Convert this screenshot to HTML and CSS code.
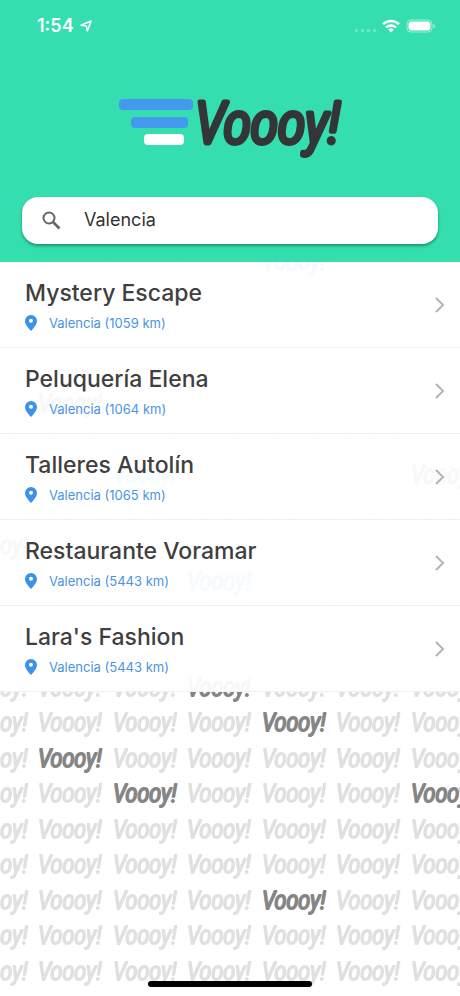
FILE: index.html
```
<!DOCTYPE html>
<html lang="es">
<head>
<meta charset="utf-8">
<meta name="viewport" content="width=device-width, initial-scale=1">
<title>Voooy!</title>
<link rel="stylesheet" href="styles.css">
</head>
<body>
<div class="screen">
  <svg class="wallpaper" aria-hidden="true">
    <defs>
      <pattern id="tile" x="37" y="1" width="149" height="71" patternUnits="userSpaceOnUse">
        <g class="mark mark-pale">
          <text x="1" y="20">Voooy!</text>
          <text x="76" y="20">Voooy!</text>
          <text x="1" y="56">Voooy!</text>
          <text x="76" y="56">Voooy!</text>
        </g>
      </pattern>
    </defs>
    <rect width="100%" height="100%" fill="url(#tile)"/>
    <g class="mark mark-blue">
      <text x="262" y="270">Voooy!</text>
      <text x="187" y="590">Voooy!</text>
    </g>
    <g class="mark mark-green">
      <text x="113" y="483">Voooy!</text>
    </g>
    <g class="mark mark-dark">
      <text x="38" y="412">Voooy!</text>
      <text x="411" y="483">Voooy!</text>
      <text x="-36" y="554">Voooy!</text>
      <text x="187" y="696">Voooy!</text>
      <text x="262" y="731">Voooy!</text>
      <text x="38" y="767">Voooy!</text>
      <text x="113" y="802">Voooy!</text>
      <text x="411" y="802">Voooy!</text>
      <text x="262" y="909">Voooy!</text>
    </g>
  </svg>

  <header class="header">
    <div class="status">
      <div class="status-group">
        <span class="time">1:54</span>
        <svg width="12" height="12" viewBox="0 0 12 12" aria-hidden="true"><path d="M11 1 7.400 11 6.200 5.900 1 5.200Z" fill="none" stroke="#fff" stroke-width="1.500" stroke-linejoin="round"/></svg>
      </div>
      <div class="status-group">
        <svg class="signal" width="21" height="14" viewBox="0 0 21 14" aria-hidden="true"><g fill="#fff" opacity=".3"><rect y="10" width="3" height="3" rx="1"/><rect x="6" y="10" width="3" height="3" rx="1"/><rect x="12" y="10" width="3" height="3" rx="1"/><rect x="18" y="10" width="3" height="3" rx="1"/></g></svg>
        <svg width="18" height="14" viewBox="0 0 18 14" aria-hidden="true"><g fill="none" stroke="#fff" stroke-width="2.400"><path d="M1 5.200A11.500 11.500 0 0 1 17 5.200"/><path d="M4 8.500A7.200 7.200 0 0 1 14 8.500"/></g><path d="M6.200 10.700A4 4 0 0 1 11.800 10.700L9 13.500Z" fill="#fff"/></svg>
        <svg width="30" height="14" viewBox="0 0 30 14" aria-hidden="true"><rect x="1" y="1" width="25" height="12" rx="4" fill="none" stroke="#fff" opacity=".5"/><rect x="3" y="3" width="21" height="8" rx="2" fill="#fff" stroke="#fff"/><path d="M27.500 5v4.500q1.500-.6 1.500-2.200T27.500 5Z" fill="#fff" opacity=".6"/></svg>
      </div>
    </div>

    <svg class="logo" width="222" height="68" viewBox="0 0 222 68" role="img" aria-label="Voooy!">
      <rect y="2" width="74" height="11" rx="4" fill="#4299ee"/>
      <rect x="12" y="20" width="57" height="11" rx="4" fill="#4299ee"/>
      <rect x="25" y="37" width="40" height="11" rx="4" fill="#fff"/>
      <text class="wordmark" x="76" y="46">Voooy!</text>
    </svg>

    <form class="search" role="search">
      <label class="search-label" for="city" aria-label="Ciudad">
        <svg width="19" height="19" viewBox="0 0 19 19" aria-hidden="true"><g fill="none" stroke="#666" stroke-width="2"><circle cx="7" cy="7" r="5.500"/><path d="M11 11l6.500 6.500" stroke-width="2.600"/></g></svg>
      </label>
      <input class="search-input" id="city" type="text" value="Valencia">
    </form>
  </header>

  <main>
    <ul class="list">
      <li><a class="row" href="#mystery">
        <span class="info"><span class="name">Mystery Escape</span>
          <span class="place"><svg width="12" height="16" viewBox="0 0 12 16" aria-hidden="true"><path fill-rule="evenodd" d="M6 0a6 6 0 0 0-6 6c0 4.300 6 10 6 10s6-5.700 6-10a6 6 0 0 0-6-6Zm0 3.800a2 2 0 1 1 0 4 2 2 0 0 1 0-4Z" fill="#3c92ea"/></svg>Valencia (1059 km)</span></span>
        <svg class="chevron" width="10" height="16" viewBox="0 0 10 16" aria-hidden="true"><path d="M1 1l7 7-7 7"/></svg></a></li>
      <li><a class="row" href="#elena">
        <span class="info"><span class="name">Peluquería Elena</span>
          <span class="place"><svg width="12" height="16" viewBox="0 0 12 16" aria-hidden="true"><path fill-rule="evenodd" d="M6 0a6 6 0 0 0-6 6c0 4.300 6 10 6 10s6-5.700 6-10a6 6 0 0 0-6-6Zm0 3.800a2 2 0 1 1 0 4 2 2 0 0 1 0-4Z" fill="#3c92ea"/></svg>Valencia (1064 km)</span></span>
        <svg class="chevron" width="10" height="16" viewBox="0 0 10 16" aria-hidden="true"><path d="M1 1l7 7-7 7"/></svg></a></li>
      <li><a class="row" href="#autolin">
        <span class="info"><span class="name">Talleres Autolín</span>
          <span class="place"><svg width="12" height="16" viewBox="0 0 12 16" aria-hidden="true"><path fill-rule="evenodd" d="M6 0a6 6 0 0 0-6 6c0 4.300 6 10 6 10s6-5.700 6-10a6 6 0 0 0-6-6Zm0 3.800a2 2 0 1 1 0 4 2 2 0 0 1 0-4Z" fill="#3c92ea"/></svg>Valencia (1065 km)</span></span>
        <svg class="chevron" width="10" height="16" viewBox="0 0 10 16" aria-hidden="true"><path d="M1 1l7 7-7 7"/></svg></a></li>
      <li><a class="row" href="#voramar">
        <span class="info"><span class="name">Restaurante Voramar</span>
          <span class="place"><svg width="12" height="16" viewBox="0 0 12 16" aria-hidden="true"><path fill-rule="evenodd" d="M6 0a6 6 0 0 0-6 6c0 4.300 6 10 6 10s6-5.700 6-10a6 6 0 0 0-6-6Zm0 3.800a2 2 0 1 1 0 4 2 2 0 0 1 0-4Z" fill="#3c92ea"/></svg>Valencia (5443 km)</span></span>
        <svg class="chevron" width="10" height="16" viewBox="0 0 10 16" aria-hidden="true"><path d="M1 1l7 7-7 7"/></svg></a></li>
      <li><a class="row" href="#lara">
        <span class="info"><span class="name">Lara's Fashion</span>
          <span class="place"><svg width="12" height="16" viewBox="0 0 12 16" aria-hidden="true"><path fill-rule="evenodd" d="M6 0a6 6 0 0 0-6 6c0 4.300 6 10 6 10s6-5.700 6-10a6 6 0 0 0-6-6Zm0 3.800a2 2 0 1 1 0 4 2 2 0 0 1 0-4Z" fill="#3c92ea"/></svg>Valencia (5443 km)</span></span>
        <svg class="chevron" width="10" height="16" viewBox="0 0 10 16" aria-hidden="true"><path d="M1 1l7 7-7 7"/></svg></a></li>
    </ul>
  </main>
  <div class="home-bar"></div>
</div>
</body>
</html>
```
FILE: styles.css
```
* { box-sizing: border-box; }

body {
  margin: 0;
  background: #fff;
  color: #3f3f41;
  font-family: Inter, "Liberation Sans", sans-serif;
}

svg { display: block; flex: none; }

.screen {
  position: relative;
  min-height: 100vh;
  overflow: hidden;
  isolation: isolate;
}

.wallpaper {
  position: absolute;
  inset: 0;
  z-index: -1;
  width: 100%;
  height: 100%;
}

/* Lettering: a light narrow italic thickened by a round stroke */
.mark, .wordmark {
  font-family: "Roboto Condensed", "Liberation Sans Narrow", Roboto, sans-serif;
  font-style: italic;
  font-weight: 300;
  stroke-linejoin: round;
}
.mark { font-size: 25px; stroke-width: 2px; }
.mark-pale { fill: #e0e0e0; stroke: #e0e0e0; }
.mark-dark { fill: #858585; stroke: #858585; }
.mark-blue { fill: #6aaef5; stroke: #6aaef5; }
.mark-green { fill: #5fe3ba; stroke: #5fe3ba; }
.wordmark {
  font-size: 57px;
  fill: #333537;
  stroke: #333537;
  stroke-width: 5px;
}

.header {
  display: flex;
  flex-direction: column;
  padding: 16px 22px 18px;
  background: #34deae;
}

.status {
  display: flex;
  justify-content: space-between;
  align-items: center;
  height: 20px;
  padding: 0 2px 0 15px;
  color: #fff;
}
.status-group { display: flex; align-items: center; gap: 6px; }
.time { font-size: 18px; font-weight: 600; line-height: 20px; }

.logo { align-self: center; margin: 61px 0 32px; overflow: visible; }

.search {
  display: flex;
  align-items: center;
  height: 47px;
  padding: 0 20px;
  border-radius: 16px;
  background: #fff;
  box-shadow: 0 2px 3px rgba(0, 60, 40, .45);
}
.search-label { flex: none; width: 42px; }
.search-input {
  flex: 1;
  min-width: 0;
  padding: 0 0 2px;
  border: 0;
  outline: 0;
  background: none;
  color: #333;
  font: 400 18px/24px Inter, "Liberation Sans", sans-serif;
}

.list { margin: 0; padding: 0; list-style: none; }
.row {
  display: flex;
  justify-content: space-between;
  align-items: center;
  height: 86px;
  padding: 0 15px 0 25px;
  border-bottom: 1px solid #f0f0f0;
  background: rgba(255, 255, 255, .94);
  color: inherit;
  text-decoration: none;
}
.info { display: flex; flex-direction: column; gap: 8px; }
.name { font-size: 23px; font-weight: 500; line-height: 28px; }
.place {
  display: flex;
  align-items: center;
  gap: 12px;
  color: #4a94e4;
  font-size: 13px;
  line-height: 16px;
}
.chevron { fill: none; stroke: #b4b4b4; stroke-width: 2px; }

.home-bar {
  position: absolute;
  bottom: 9px;
  left: 50%;
  width: 164px;
  height: 6px;
  margin-left: -82px;
  border-radius: 3px;
  background: #000;
}
```
